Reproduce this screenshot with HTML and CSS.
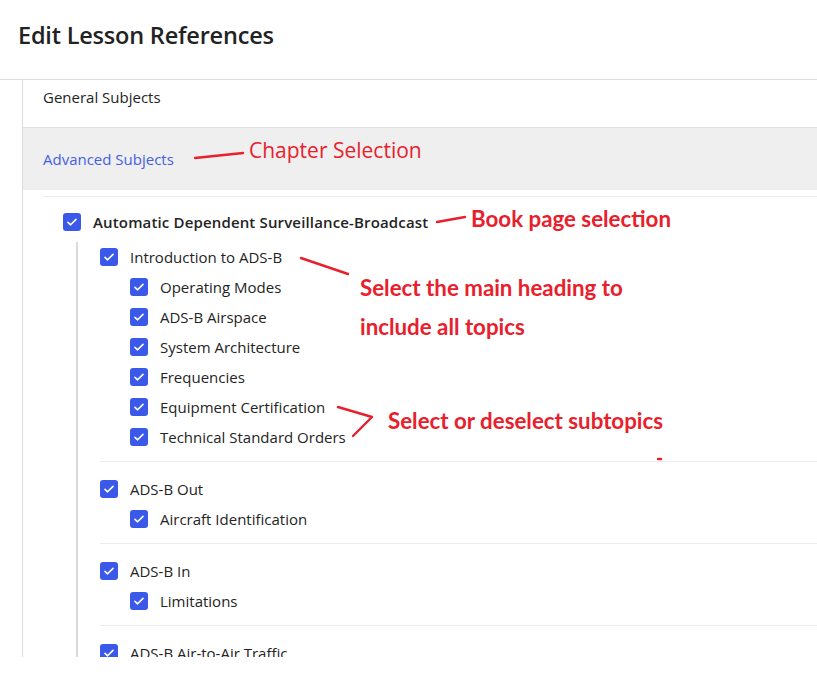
FILE: index.html
```html
<!DOCTYPE html>
<html>
<head>
<meta charset="utf-8">
<link rel="stylesheet" href="styles.css">
</head>
<body>
<div class="page">
  <header class="header">
    <h1 class="title">Edit Lesson References</h1>
  </header>
  <div class="body">
    <div class="gutter"></div>
    <div class="content">
      <div class="chapter">General Subjects</div>
      <div class="chapter active">Advanced Subjects</div>
      <div class="book">
        <div class="row book-row">
          <span class="cb"><svg viewBox="0 0 18 18"><path d="M5 9.3l2.6 2.5L13 6.4" fill="none" stroke="#fff" stroke-width="1.6" stroke-linecap="round" stroke-linejoin="round"/></svg></span>
          <span class="label bold">Automatic Dependent Surveillance-Broadcast</span>
        </div>
        <div class="children">
          <div class="group first">
            <div class="row">
              <span class="cb"><svg viewBox="0 0 18 18"><path d="M5 9.3l2.6 2.5L13 6.4" fill="none" stroke="#fff" stroke-width="1.6" stroke-linecap="round" stroke-linejoin="round"/></svg></span>
              <span class="label">Introduction to ADS-B</span>
            </div>
            <div class="row sub">
              <span class="cb"><svg viewBox="0 0 18 18"><path d="M5 9.3l2.6 2.5L13 6.4" fill="none" stroke="#fff" stroke-width="1.6" stroke-linecap="round" stroke-linejoin="round"/></svg></span>
              <span class="label">Operating Modes</span>
            </div>
            <div class="row sub">
              <span class="cb"><svg viewBox="0 0 18 18"><path d="M5 9.3l2.6 2.5L13 6.4" fill="none" stroke="#fff" stroke-width="1.6" stroke-linecap="round" stroke-linejoin="round"/></svg></span>
              <span class="label">ADS-B Airspace</span>
            </div>
            <div class="row sub">
              <span class="cb"><svg viewBox="0 0 18 18"><path d="M5 9.3l2.6 2.5L13 6.4" fill="none" stroke="#fff" stroke-width="1.6" stroke-linecap="round" stroke-linejoin="round"/></svg></span>
              <span class="label">System Architecture</span>
            </div>
            <div class="row sub">
              <span class="cb"><svg viewBox="0 0 18 18"><path d="M5 9.3l2.6 2.5L13 6.4" fill="none" stroke="#fff" stroke-width="1.6" stroke-linecap="round" stroke-linejoin="round"/></svg></span>
              <span class="label">Frequencies</span>
            </div>
            <div class="row sub">
              <span class="cb"><svg viewBox="0 0 18 18"><path d="M5 9.3l2.6 2.5L13 6.4" fill="none" stroke="#fff" stroke-width="1.6" stroke-linecap="round" stroke-linejoin="round"/></svg></span>
              <span class="label">Equipment Certification</span>
            </div>
            <div class="row sub">
              <span class="cb"><svg viewBox="0 0 18 18"><path d="M5 9.3l2.6 2.5L13 6.4" fill="none" stroke="#fff" stroke-width="1.6" stroke-linecap="round" stroke-linejoin="round"/></svg></span>
              <span class="label">Technical Standard Orders</span>
            </div>
          </div>
          <div class="group">
            <div class="row">
              <span class="cb"><svg viewBox="0 0 18 18"><path d="M5 9.3l2.6 2.5L13 6.4" fill="none" stroke="#fff" stroke-width="1.6" stroke-linecap="round" stroke-linejoin="round"/></svg></span>
              <span class="label">ADS-B Out</span>
            </div>
            <div class="row sub">
              <span class="cb"><svg viewBox="0 0 18 18"><path d="M5 9.3l2.6 2.5L13 6.4" fill="none" stroke="#fff" stroke-width="1.6" stroke-linecap="round" stroke-linejoin="round"/></svg></span>
              <span class="label">Aircraft Identification</span>
            </div>
          </div>
          <div class="group">
            <div class="row">
              <span class="cb"><svg viewBox="0 0 18 18"><path d="M5 9.3l2.6 2.5L13 6.4" fill="none" stroke="#fff" stroke-width="1.6" stroke-linecap="round" stroke-linejoin="round"/></svg></span>
              <span class="label">ADS-B In</span>
            </div>
            <div class="row sub">
              <span class="cb"><svg viewBox="0 0 18 18"><path d="M5 9.3l2.6 2.5L13 6.4" fill="none" stroke="#fff" stroke-width="1.6" stroke-linecap="round" stroke-linejoin="round"/></svg></span>
              <span class="label">Limitations</span>
            </div>
          </div>
          <div class="group last">
            <div class="row">
              <span class="cb"><svg viewBox="0 0 18 18"><path d="M5 9.3l2.6 2.5L13 6.4" fill="none" stroke="#fff" stroke-width="1.6" stroke-linecap="round" stroke-linejoin="round"/></svg></span>
              <span class="label">ADS-B Air-to-Air Traffic</span>
            </div>
          </div>
        </div>
      </div>
    </div>
  </div>

  <div class="annotations">
    <svg class="marks" width="817" height="687" viewBox="0 0 817 687">
      <g fill="none" stroke="#e8202c" stroke-width="2.4" stroke-linecap="round" stroke-linejoin="round">
        <path d="M195 158 L243 153"/>
        <path d="M437 222 L465 217"/>
        <path d="M301 258 L348 274"/>
        <path d="M338 407 L372 417 L353 436"/>
        <path d="M658 459 L661 459"/>
      </g>
    </svg>
    <span class="note plain note-chapter">Chapter Selection</span>
    <span class="note note-book">Book page selection</span>
    <span class="note note-main1">Select the main heading to</span>
    <span class="note note-main2">include all topics</span>
    <span class="note note-sub">Select or deselect subtopics</span>
  </div>
</div>
</body>
</html>
```

FILE: styles.css
```css
* { box-sizing: border-box; }
html, body { margin: 0; padding: 0; background: #fff; }
body {
  font-family: "Open Sans", "Noto Sans", sans-serif;
  color: #242424;
  width: 817px;
  height: 687px;
  overflow: hidden;
}
.page { position: relative; width: 817px; height: 687px; }

.header {
  height: 80px;
  border-bottom: 1px solid #dcdcdc;
  padding: 18px 0 0 18px;
}
.title {
  margin: 0;
  font-size: 23.5px;
  font-weight: 600;
  line-height: 34px;
  color: #222;
  letter-spacing: -0.2px;
}

.body {
  display: flex;
  height: 577px;
  overflow: hidden;
}
.gutter {
  width: 23px;
  flex: none;
  border-right: 1px solid #dcdcdc;
}
.content { flex: 1; min-width: 0; }

.chapter {
  height: 48px;
  padding: 7px 0 0 20px;
  font-size: 15px;
  line-height: 20px;
  border-bottom: 1px solid #e0e0e0;
}
.chapter.active {
  height: 62px;
  padding-top: 21px;
  background: #efefef;
  color: #4360e6;
  border-bottom: none;
}

.book {
  margin: 6px 0 0 20px;
  border-top: 1px solid #ececec;
}
.row {
  height: 30px;
  display: flex;
  align-items: center;
  gap: 12px;
  font-size: 15px;
}
.book-row {
  padding-left: 20px;
  margin-top: 10px;
  margin-bottom: 5px;
}
.bold { font-weight: 600; letter-spacing: 0.15px; }

.cb {
  width: 18px;
  height: 18px;
  flex: none;
  border-radius: 3px;
  background: #3b59e8;
  display: flex;
}
.cb svg { width: 18px; height: 18px; }

.children {
  margin-left: 33px;
  border-left: 2px solid #dadada;
  padding-left: 22px;
}
.group {
  padding: 12px 0 9px;
  border-top: 1px solid #ececec;
}
.group.first { border-top: none; padding-top: 0; }
.group.last { padding-bottom: 0; }
.sub { padding-left: 30px; }

.annotations {
  position: absolute;
  inset: 0;
  pointer-events: none;
}
.marks { position: absolute; left: 0; top: 0; }
.note {
  position: absolute;
  color: #e8202c;
  font-family: "Lato", "Open Sans", sans-serif;
  font-weight: 700;
  font-size: 22.3px;
  line-height: 24px;
  white-space: nowrap;
}
.note.plain {
  font-family: "Open Sans", sans-serif;
  font-weight: 400;
  font-size: 21px;
}
.note-chapter { left: 249px; top: 138px; }
.note-book { left: 471px; top: 207px; }
.note-main1 { left: 360px; top: 276px; }
.note-main2 { left: 360px; top: 315px; }
.note-sub { left: 388px; top: 409px; }
```
